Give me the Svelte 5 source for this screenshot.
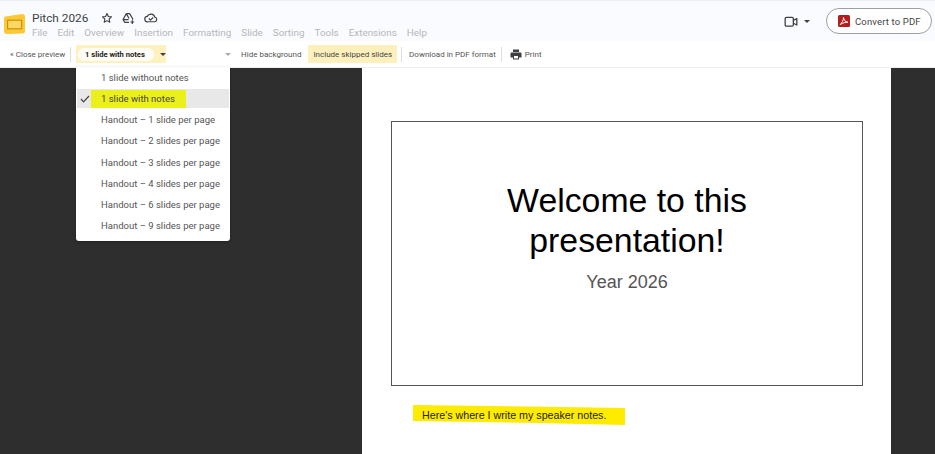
<script>
  const menus = ['File', 'Edit', 'Overview', 'Insertion', 'Formatting', 'Slide', 'Sorting', 'Tools', 'Extensions', 'Help'];
  const layouts = [
    '1 slide without notes',
    '1 slide with notes',
    'Handout – 1 slide per page',
    'Handout – 2 slides per page',
    'Handout – 3 slides per page',
    'Handout – 4 slides per page',
    'Handout – 6 slides per page',
    'Handout – 9 slides per page'
  ];
  const selected = '1 slide with notes';
</script>

<div class="app">
  <header class="topbar">
    <div class="doc">
      <svg class="logo" width="21" height="20" viewBox="0 0 21 20">
        <path d="M1.500 2.500 L18 0 Q21 0 21 2.500 V17 Q21 19.500 18.500 19.500 L3 20 Q0 20 0 17.500 V4 Q0 2.700 1.500 2.500Z" fill="#fcc934" />
        <rect x="3.600" y="6.200" width="14" height="8.600" fill="#fdd663" stroke="#c8930f" stroke-width="1.200" />
      </svg>
      <div class="doc-text">
        <div class="title-row">
          <span class="title">Pitch 2026</span>
          <svg class="ic first" width="12" height="12" viewBox="0 0 24 24" fill="none" stroke="#3c4043" stroke-width="2.200">
            <path d="M12 3l2.700 6 6.300.7-4.700 4.300 1.300 6.500L12 17.200 6.400 20.500l1.300-6.500L3 9.700 9.300 9z" stroke-linejoin="round" />
          </svg>
          <svg class="ic" width="13" height="13" viewBox="0 0 24 24" fill="none" stroke="#3c4043" stroke-width="2.200">
            <path d="M8 3h6l6 10-1 1M8 3L2 14l3 5h8M8 3l5 9M2 14h10M19 15v7M15.500 18.500h7" stroke-linejoin="round" />
          </svg>
          <svg class="ic" width="14" height="12" viewBox="0 0 26 22" fill="none" stroke="#3c4043" stroke-width="2.200">
            <path d="M7 18a5 5 0 0 1-1-10 7.500 7.500 0 0 1 14 1.500A4.300 4.300 0 0 1 20 18zM9 12l3 3 5-5" stroke-linejoin="round" />
          </svg>
        </div>
        <nav class="menus">
          {#each menus as m}
            <span>{m}</span>
          {/each}
        </nav>
      </div>
    </div>
    <div class="actions">
      <svg width="14" height="13" viewBox="0 0 24 22" fill="none" stroke="#3c4043" stroke-width="2.200">
        <rect x="2" y="4" width="14" height="15" rx="2" />
        <path d="M16 9l6-3v11l-6-3" stroke-linejoin="round" />
      </svg>
      <span class="caret dark"></span>
      <button class="pdf">
        <svg width="12" height="12" viewBox="0 0 12 12">
          <rect width="12" height="12" rx="1.500" fill="#b71c1c" />
          <path d="M2.200 9.500C4 8 5.500 5 5.500 2.500c.3 2.500 2 4.500 4.500 4.800-2.500-.2-5 .6-7.800 2.200z" fill="none" stroke="#fff" stroke-width="1" />
        </svg>
        Convert to PDF
      </button>
    </div>
  </header>

  <div class="toolbar">
    <span class="tool close">« Close preview</span>
    <span class="sep"></span>
    <div class="layout-select">
      <span class="select-label">1 slide with notes</span>
      <span class="caret dark small"></span>
    </div>
    <span class="caret light"></span>
    <span class="tool">Hide background</span>
    <span class="tool skipped">Include skipped slides</span>
    <span class="sep first"></span>
    <span class="tool">Download in PDF format</span>
    <span class="sep"></span>
    <svg class="printer" width="12" height="11" viewBox="0 0 24 22" fill="#3c4043">
      <path d="M6 1h12v5H6zM3 7h18a2 2 0 0 1 2 2v8h-5v4H6v-4H1V9a2 2 0 0 1 2-2zm5 7v5h8v-5z" />
    </svg>
    <span class="tool">Print</span>
  </div>

  <main class="stage">
    <div class="page">
      <div class="slide">
        <h1>Welcome to this<br />presentation!</h1>
        <p>Year 2026</p>
      </div>
      <div class="notes"><span>Here's where I write my speaker notes.</span></div>
    </div>
  </main>

  <ul class="dropdown">
    {#each layouts as item}
      <li class:active={item === selected}>
        {#if item === selected}
          <svg class="check" width="10" height="8" viewBox="0 0 10 8" fill="none" stroke="#444" stroke-width="1.200">
            <path d="M1 4l2.500 2.800L9 1" />
          </svg>
          <span class="marker">{item}</span>
        {:else}
          {item}
        {/if}
      </li>
    {/each}
  </ul>
</div>

<style>
  :global(body) {
    margin: 0;
    overflow: hidden;
  }

  .app {
    position: relative;
    width: 935px;
    height: 454px;
    display: flex;
    flex-direction: column;
    font-family: Roboto, sans-serif;
    background: #2e2e2e;
    overflow: hidden;
  }

  .topbar {
    height: 41px;
    flex: none;
    display: flex;
    justify-content: space-between;
    background: #fafbfe;
    border-top: 1px solid #eee;
    box-sizing: border-box;
  }

  .doc {
    display: flex;
    width: 764px;
    height: 42px;
    padding: 13px 0 0 4px;
    box-sizing: border-box;
    border-bottom: 2px solid #e3e3e3;
  }

  .logo {
    flex: none;
  }

  .doc-text {
    margin: -4px 0 0 7px;
  }

  .title-row {
    display: flex;
    align-items: center;
    height: 16px;
  }

  .title {
    font-size: 11.8px;
    color: #3c4043;
  }

  .ic {
    margin-left: 9px;
  }

  .ic.first {
    margin-left: 13px;
  }

  .menus {
    display: flex;
    gap: 10px;
    margin-top: 1px;
    font-size: 9.900px;
    color: #b4b7ba;
  }

  .actions {
    display: flex;
    align-items: center;
    height: 42px;
    padding-right: 3px;
    margin-top: -1px;
  }

  .caret {
    width: 0;
    height: 0;
    border-left: 3px solid transparent;
    border-right: 3px solid transparent;
    border-top: 3px solid #3c4043;
  }

  .actions .caret {
    margin: 0 16px 0 6px;
  }

  .caret.light {
    border-top-color: #aaa;
    margin: 0 10px 0 59px;
  }

  .caret.small {
    margin-left: 6px;
  }

  .pdf {
    display: flex;
    align-items: center;
    gap: 5px;
    width: 106px;
    height: 26px;
    padding: 0 0 0 11px;
    border: 1px solid #9aa0a6;
    border-radius: 13px;
    background: #fff;
    font: 9.500px Roboto, sans-serif;
    letter-spacing: 0.15px;
    color: #444;
    white-space: nowrap;
  }

  .toolbar {
    height: 26px;
    flex: none;
    display: flex;
    align-items: center;
    padding-left: 10px;
    background: #fff;
    font-size: 8px;
    color: #555;
    box-sizing: border-box;
    white-space: nowrap;
  }

  .sep {
    width: 1px;
    height: 15px;
    background: #ddd;
    margin: 0 5px;
  }

  .sep.first {
    margin: 0 5px 0 4px;
  }

  .tool.close {
    width: 55px;
  }

  .layout-select {
    display: flex;
    align-items: center;
    width: 90px;
    height: 18px;
    padding: 0 0 0 2px;
    background: #fdf1c0;
    box-sizing: border-box;
    font-weight: 700;
    color: #222;
  }

  .select-label {
    display: flex;
    align-items: center;
    width: 77px;
    height: 13px;
    padding-left: 7px;
    box-sizing: border-box;
    background: #fffdf5;
    border-radius: 6px;
    white-space: nowrap;
    font-size: 7.600px;
  }

  .tool.skipped {
    display: flex;
    align-items: center;
    height: 18px;
    padding: 0 5px;
    margin-left: 7px;
    background: #fdf0bd;
    color: #444;
  }

  .toolbar > .sep + .tool {
    margin-left: 2px;
  }

  .printer {
    margin: 0 3px 0 3px;
  }

  .stage {
    flex: 1;
    display: flex;
    padding-left: 362px;
    border-top: 1px solid #eee;
  }

  .page {
    width: 529px;
    background: #fff;
    padding: 53px 0 0 29px;
    box-sizing: border-box;
  }

  .slide {
    width: 472px;
    height: 265px;
    border: 1px solid #555;
    box-sizing: border-box;
    text-align: center;
    color: #000;
    font-family: 'Liberation Sans', Arial, sans-serif;
  }

  h1 {
    margin: 58px 0 0;
    font-size: 33.800px;
    line-height: 40px;
    font-weight: 400;
  }

  .slide p {
    margin: 12px 0 0;
    font-size: 18px;
    color: #555;
  }

  .notes {
    margin: 18px 0 0 22px;
    font-family: 'Liberation Sans', Arial, sans-serif;
    font-size: 10.700px;
    color: #222;
  }

  .notes span {
    display: inline-block;
    width: 212px;
    height: 21px;
    padding: 5px 0 0 9px;
    box-sizing: border-box;
    background: #ffeb00;
    white-space: nowrap;
    clip-path: polygon(0 1px, 70% 3px, 100% 4px, 100% 100%, 60% 19px, 0 17px);
  }

  .dropdown {
    position: absolute;
    left: 76px;
    top: 67px;
    width: 154px;
    height: 174px;
    margin: 0;
    padding: 0 1px;
    box-sizing: border-box;
    list-style: none;
    background: #fff;
    border-radius: 0 0 3px 3px;
    box-shadow: 0 1px 3px rgba(0, 0, 0, 0.3);
    font-size: 9.500px;
    color: #555;
  }

  li {
    position: relative;
    display: flex;
    align-items: center;
    height: 21.200px;
    padding-left: 24px;
    white-space: nowrap;
  }

  li.active {
    background: #e8e8e8;
    height: 19px;
    margin: 1px 0;
  }

  .check {
    position: absolute;
    left: 3px;
    top: 6px;
  }

  .marker {
    display: flex;
    align-items: center;
    height: 18px;
    width: 95px;
    margin-left: -10px;
    padding-left: 10px;
    box-sizing: border-box;
    background: #ecf01a;
    color: #444;
  }
</style>
